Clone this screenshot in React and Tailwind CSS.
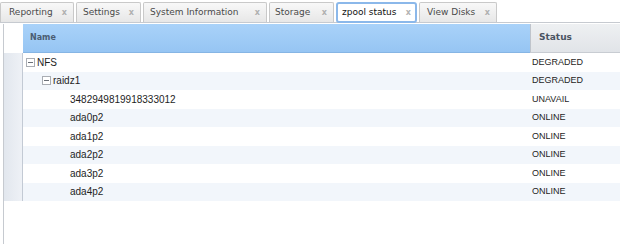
import React from "react";

const tabs = [
  { label: "Reporting", w: "w-[74px]", pl: "pl-[8px]" },
  { label: "Settings", w: "w-[65px]", pl: "pl-[6px]" },
  { label: "System Information", w: "w-[124px]", pl: "pl-[6px]" },
  { label: "Storage", w: "w-[65px]", pl: "pl-[5px]" },
  { label: "zpool status", w: "w-[81px]", pl: "pl-[4px]", active: true },
  { label: "View Disks", w: "w-[78px]", pl: "pl-[7px]" },
];

const rows = [
  { name: "NFS", level: 0, box: true, status: "DEGRADED" },
  { name: "raidz1", level: 1, box: true, status: "DEGRADED" },
  { name: "3482949819918333012", level: 2, status: "UNAVAIL" },
  { name: "ada0p2", level: 2, status: "ONLINE" },
  { name: "ada1p2", level: 2, status: "ONLINE" },
  { name: "ada2p2", level: 2, status: "ONLINE" },
  { name: "ada3p2", level: 2, status: "ONLINE" },
  { name: "ada4p2", level: 2, status: "ONLINE" },
];

function MinusBox() {
  return (
    <span className="relative inline-block w-[9px] h-[9px] border border-[#a9adb3] bg-white shrink-0">
      <span className="absolute left-[1px] right-[1px] top-[3px] h-[1px] bg-[#6b7078]" />
    </span>
  );
}

export default function App() {
  return (
    <div className="w-[620px] h-[244px] bg-white overflow-hidden flex flex-col">
      {/* Tab bar */}
      <div className="h-[23px] flex items-end gap-[2px] border-b border-[#c6cad0] shrink-0 font-['DejaVu_Sans',sans-serif] text-[9px]">
        {tabs.map((t) =>
          t.active ? (
            <div
              key={t.label}
              className={`${t.w} h-[21px] -mb-[1px] flex items-center ${t.pl} pr-[4px] bg-white border-[2px] border-[#8bb8ea] rounded-[3px] text-[#111]`}
            >
              <span>{t.label}</span>
              <span className="ml-auto text-[#b3b3b3] font-bold text-[8px]">x</span>
            </div>
          ) : (
            <div
              key={t.label}
              className={`${t.w} h-[20px] flex items-center ${t.pl} pr-[6px] bg-gradient-to-b from-[#f8f8f8] to-[#e7e7e7] border border-b-0 border-[#c9c9c9] rounded-t-[2px] text-[#4a4a4a]`}
            >
              <span>{t.label}</span>
              <span className="ml-auto text-[#b0b0b0] font-bold text-[8px]">x</span>
            </div>
          )
        )}
      </div>

      {/* Grid body */}
      <div className="flex-1 flex pt-[1px]">
        {/* left row-number column */}
        <div className="ml-[3px] w-[20px] border-l border-[#c6cad0] flex flex-col shrink-0">
          <div className="h-[29px] bg-white" />
          {rows.map((r) => (
            <div
              key={r.name}
              className="h-[18.5px] bg-gradient-to-r from-[#e2e7ee] to-[#eef1f6] border-r border-[#c3cad4]"
            />
          ))}
        </div>

        {/* table */}
        <div className="flex-1 flex flex-col">
          <div className="h-[29px] flex">
            <div className="w-[507px] h-full flex items-center pl-[7px] bg-gradient-to-b from-[#a9d2f9] to-[#96c5f3] border-b border-[#86b5e4] font-['DejaVu_Sans',sans-serif] font-bold text-[8px] text-[#4b5d72]">
              Name
            </div>
            <div className="flex-1 h-full flex items-center pl-[8px] bg-gradient-to-b from-[#eef0f2] to-[#e1e4e8] border-l border-[#bfc4cb] border-b border-b-[#c8ccd2] font-['DejaVu_Sans',sans-serif] font-bold text-[9px] text-[#4a5462]">
              Status
            </div>
          </div>
          {rows.map((r, i) => (
            <div
              key={r.name}
              className={`h-[18.5px] flex items-center ${i % 2 === 1 ? "bg-[#f2f6fb]" : "bg-white"}`}
            >
              <div
                className={`w-[507px] flex items-center font-['Liberation_Sans',Arial,sans-serif] text-[10px] text-[#1e1e1e] ${
                  r.level === 0 ? "pl-[3px]" : r.level === 1 ? "pl-[19px]" : "pl-[47px]"
                }`}
              >
                {r.box && <MinusBox />}
                <span className={r.box ? "ml-[2px]" : ""}>{r.name}</span>
              </div>
              <div className="flex-1 pl-[2px] font-['Liberation_Sans',Arial,sans-serif] text-[9px] text-[#1e1e1e]">
                {r.status}
              </div>
            </div>
          ))}
        </div>
      </div>
    </div>
  );
}
